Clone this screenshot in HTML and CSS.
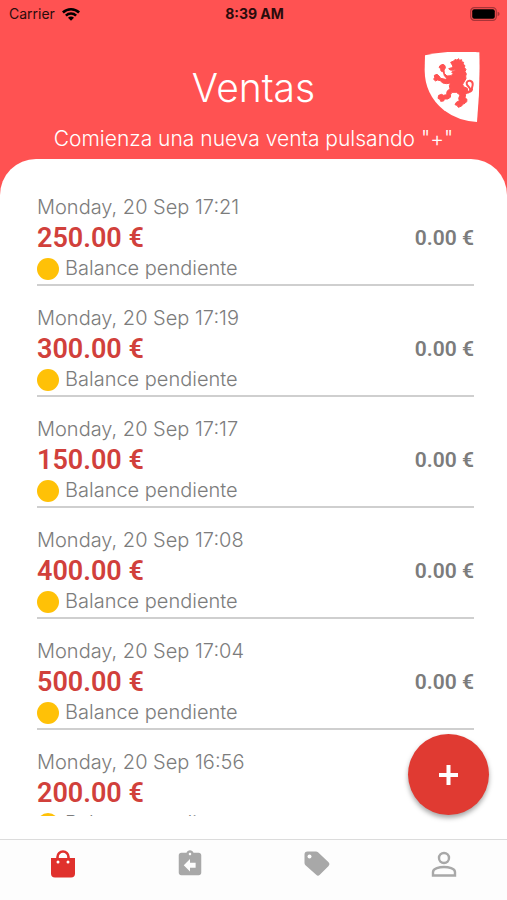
FILE: index.html
```html
<!DOCTYPE html>
<html lang="es">
<head>
    <meta charset="UTF-8">
    <meta name="viewport" content="width=device-width, initial-scale=1.0">
    <title>Ventas</title>
    <link rel="stylesheet" href="styles.css">
</head>
<body>
    <div class="status-bar">
        <div class="carrier">
            <span>Carrier</span>
            <svg width="20" height="14" viewBox="0 0 20 14">
                <path d="M1 4.6a13 13 0 0 1 18 0l-1.8 1.9a10.4 10.4 0 0 0-14.4 0z"/>
                <path d="M4 7.7a8.6 8.6 0 0 1 12 0l-1.8 1.8a6 6 0 0 0-8.4 0z"/>
                <path d="M7 10.7a4.2 4.2 0 0 1 6 0L10 13.8z"/>
            </svg>
        </div>
        <div class="time">8:39 AM</div>
        <svg class="battery" width="30" height="14" viewBox="0 0 30 14">
            <rect x="0.7" y="0.7" width="25.6" height="12.6" rx="3.6" fill="none" stroke="#a83438" stroke-width="1.2"/>
            <rect x="2.2" y="2.2" width="22.6" height="9.6" rx="2"/>
            <path d="M27.6 4.8q2 .6 2 2.2t-2 2.2z" fill="#a83438"/>
        </svg>
    </div>

    <header class="header">
        <h1>Ventas</h1>
        <p>Comienza una nueva venta pulsando "+"</p>
        <svg class="shield" width="56" height="72" viewBox="28 36 168 216">
            <path fill="#fff" d="M31 46Q108 29 194 37Q197 142 187 246Q130 243 88 211Q30 164 30 90Z"/>
            <path fill="#ff5252" stroke="#ff5252" stroke-width="3" stroke-linejoin="round" d="M108 67l9-4 6-6 3 4 6-5 2 5 7-2v6l6 2-2 5 6 5-2 5 5 7-3 5 4 8-2 6 1 8-6 10-4 7 3 7 11 5 1 8-6 10-2 11 6 4-1 7-5 5-7 3-3 5-10 4-4-6-6-2 4-7 9-5-2-7 4-10-11-8-13 0-4 6-1 9-8 5-10 0-2 6-9 1-2-6-6-3 2-9 9-3 5 3 10-2 1-10 9-8-2-9 4-8-12 2-12-2-7-7-9-2-5 3-6-5 3-6-1-6 8-3 6 5 5 7 14 3 5-2-8-9-3-11-7-3-1-7-5-4 4-6 8-3 6 4 1 7-4 6 1 10 8 8 12-1 6-6-4-5 8-3 6-6-9 4-9-1-5-4 9-3 4-4z"/>
            <path fill="none" stroke="#ff5252" stroke-width="6" stroke-linecap="round" d="M147 156c14 6 22-1 19-10-2-6-12-10-10-18 3-9 17-8 18 3 1 9-4 12-2 18-2 6-8 8-12 6"/>
        </svg>
    </header>

    <main class="panel">
        <ul class="sales" id="sales"></ul>
        <button class="add" type="button" aria-label="Nueva venta">
            <svg width="19" height="20" viewBox="0 0 19 20">
                <path d="M9.5 0v20M0 10h19" stroke="#fff" stroke-width="4"/>
            </svg>
        </button>
    </main>

    <nav class="tabs">
        <a href="#ventas" class="active" aria-label="Ventas">
            <svg width="26" height="28" viewBox="0 0 26 28">
                <path d="M7.5 9V7a5.5 5.5 0 0 1 11 0v2" fill="none" stroke="currentColor" stroke-width="2.6"/>
                <path fill="currentColor" d="M1 8h24v15.500a4 4 0 0 1-4 4H5a4 4 0 0 1-4-4z"/>
                <circle cx="8" cy="12" r="1.5" fill="#fff"/>
                <circle cx="18" cy="12" r="1.5" fill="#fff"/>
            </svg>
        </a>
        <a href="#devoluciones" aria-label="Devoluciones">
            <svg width="30" height="30" viewBox="0 0 24 24">
                <path fill="currentColor" d="M19 3h-4.180C14.400 1.840 13.300 1 12 1s-2.400.840-2.820 2H5c-1.100 0-2 .900-2 2v14c0 1.100.900 2 2 2h14c1.100 0 2-.900 2-2V5c0-1.100-.900-2-2-2zm-7 0c.550 0 1 .450 1 1s-.450 1-1 1-1-.450-1-1 .450-1 1-1zm4.500 12H12v3l-5-5 5-5v3h4.500z"/>
            </svg>
        </a>
        <a href="#productos" aria-label="Productos">
            <svg width="28" height="28" viewBox="0 0 28 28">
                <path fill="currentColor" d="M1.500 4.500a3 3 0 0 1 3-3h8.500a3 3 0 0 1 2 .8l10.600 10a2.500 2.500 0 0 1 0 3.600l-8.800 8.900a2.500 2.500 0 0 1-3.600 0L2.500 15.300a3 3 0 0 1-1-2.200z"/>
                <circle cx="6.500" cy="6.500" r="2" fill="#fff"/>
            </svg>
        </a>
        <a href="#perfil" aria-label="Perfil">
            <svg width="26" height="26" viewBox="0 0 26 26" fill="none" stroke="currentColor" stroke-width="2.4">
                <circle cx="13" cy="7" r="5"/>
                <path d="M2 24.500v-3.500c0-3.500 6.500-5 11-5s11 1.500 11 5v3.500z"/>
            </svg>
        </a>
    </nav>

    <script>
        const sales = [
            { date: 'Monday, 20 Sep 17:21', total: 250 },
            { date: 'Monday, 20 Sep 17:19', total: 300 },
            { date: 'Monday, 20 Sep 17:17', total: 150 },
            { date: 'Monday, 20 Sep 17:08', total: 400 },
            { date: 'Monday, 20 Sep 17:04', total: 500 },
            { date: 'Monday, 20 Sep 16:56', total: 200 }
        ];

        document.getElementById('sales').innerHTML = sales.map((sale, i) => `
            <li class="sale">
                <div class="date">${sale.date}</div>
                <div class="amounts">
                    <strong class="total">${sale.total.toFixed(2)} €</strong>
                    ${i < 5 ? '<span class="paid">0.00 €</span>' : ''}
                </div>
                <div class="state"><span class="dot"></span>Balance pendiente</div>
            </li>
        `).join('');
    </script>
</body>
</html>
```
FILE: styles.css
```css
* {
    box-sizing: border-box;
}
body {
    display: flex;
    flex-direction: column;
    height: 100vh;
    margin: 0;
    background-color: #ff5252;
    font-family: Inter, "Liberation Sans", sans-serif;
}
.status-bar {
    display: grid;
    grid-template-columns: 1fr auto 1fr;
    align-items: center;
    height: 27px;
    padding: 0 7px 0 9px;
    font-size: 14px;
    color: #2a0c0c;
}
.carrier {
    display: flex;
    align-items: center;
    gap: 6px;
}
.time {
    font-weight: 700;
}
.battery {
    justify-self: end;
}
.header {
    position: relative;
    height: 132px;
    padding-top: 36px;
    text-align: center;
    color: white;
}
.header h1 {
    margin: 0;
    font-size: 39px;
    font-weight: 300;
    line-height: 50px;
}
.header p {
    margin: 11px 0 0;
    font-size: 21px;
    font-weight: 300;
    line-height: 30px;
}
.shield {
    position: absolute;
    top: 25px;
    right: 27px;
}
.panel {
    position: relative;
    flex: 1;
    min-height: 0;
    padding: 16px 33px 23px 37px;
    background-color: white;
    border-radius: 36px 36px 0 0;
}
.sales {
    height: 100%;
    margin: 0;
    padding: 0;
    overflow: hidden;
    list-style: none;
}
.sale {
    padding-top: 17px;
    border-bottom: 2px solid #cfcfcf;
    font-size: 20px;
    font-weight: 350;
    line-height: 31px;
    color: #7c7c7c;
}
.amounts {
    display: flex;
    justify-content: space-between;
    height: 30px;
    line-height: 30px;
    font-family: Roboto, "Liberation Sans", sans-serif;
    font-weight: 600;
}
.total {
    font-size: 27px;
    font-weight: 600;
    color: #d1403b;
}
.paid {
    font-size: 21px;
}
.state {
    display: flex;
    align-items: center;
    gap: 6px;
}
.dot {
    width: 22px;
    height: 22px;
    border-radius: 50%;
    background-color: #ffc107;
}
.add {
    position: absolute;
    right: 18px;
    bottom: 24px;
    display: flex;
    align-items: center;
    justify-content: center;
    width: 81px;
    height: 81px;
    padding: 0;
    border: none;
    border-radius: 50%;
    background-color: #e03a32;
    box-shadow: 0 3px 5px rgba(0, 0, 0, 0.35);
    cursor: pointer;
}
.tabs {
    display: flex;
    height: 61px;
    padding-bottom: 13px;
    background-color: #fdfdfd;
    border-top: 1px solid #dcdcdc;
}
.tabs a {
    flex: 1;
    display: flex;
    align-items: center;
    justify-content: center;
    color: #a8a8a8;
}
.tabs a.active {
    color: #e0312d;
}
```
